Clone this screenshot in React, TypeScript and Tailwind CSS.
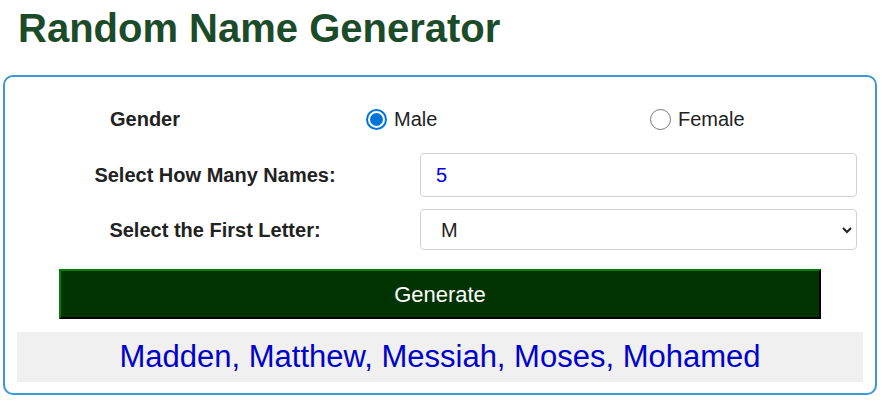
import { useState } from "react";

const letters = "ABCDEFGHIJKLMNOPQRSTUVWXYZ".split("");

function Radio({ checked, label, onClick }: { checked: boolean; label: string; onClick: () => void }) {
  return (
    <button type="button" onClick={onClick} className="flex items-center gap-[7px] text-[20px] text-[#222]">
      {checked ? (
        <span className="flex h-[21px] w-[21px] items-center justify-center rounded-full border-2 border-[#0075d9] bg-white">
          <span className="h-[13px] w-[13px] rounded-full bg-[#0075d9]" />
        </span>
      ) : (
        <span className="h-[21px] w-[21px] rounded-full border-[1.5px] border-[#767676] bg-white" />
      )}
      <span>{label}</span>
    </button>
  );
}

export default function App() {
  const [gender, setGender] = useState("male");
  const [count, setCount] = useState("5");
  const [letter, setLetter] = useState("M");

  return (
    <div className="min-h-[402px] bg-white pt-[5px] font-['Liberation_Sans',Arial,sans-serif]">
      <h1 className="ml-[18px] text-[40px] font-bold leading-[46px] text-[#1c4b2a]">Random Name Generator</h1>

      <div className="ml-[3px] mr-[5px] mt-[24px] rounded-[10px] border-2 border-[#3b97d8] px-[12px] pb-[11px] pt-[20px]">
        <div className="grid h-[44px] grid-cols-[349px_284px_1fr] items-center">
          <span className="pl-[93px] text-[20px] font-bold text-[#222]">Gender</span>
          <Radio checked={gender === "male"} label="Male" onClick={() => setGender("male")} />
          <Radio checked={gender === "female"} label="Female" onClick={() => setGender("female")} />
        </div>

        <div className="mt-[12px] grid grid-cols-[403px_437px] items-center">
          <label className="pr-[7px] text-center text-[20px] font-bold text-[#222]">Select How Many Names:</label>
          <input
            value={count}
            onChange={(e) => setCount(e.target.value)}
            className="h-[44px] rounded-[4px] border border-[#cfd3d8] px-[15px] text-[20px] text-[#0000ee] outline-none"
          />
        </div>

        <div className="mt-[12px] grid grid-cols-[403px_437px] items-center">
          <label className="pr-[7px] text-center text-[20px] font-bold text-[#222]">Select the First Letter:</label>
          <div className="relative">
            <select
              value={letter}
              onChange={(e) => setLetter(e.target.value)}
              className="h-[41px] w-full appearance-none rounded-[4px] border border-[#cfd3d8] bg-white px-[20px] text-[20px] text-[#222] outline-none"
            >
              {letters.map((l) => (
                <option key={l} value={l}>
                  {l}
                </option>
              ))}
            </select>
            <svg className="pointer-events-none absolute right-[4px] top-[15px]" width="12" height="12" viewBox="0 0 12 12">
              <path d="M2 4l4 4 4-4" fill="none" stroke="#222" strokeWidth="2" />
            </svg>
          </div>
        </div>

        <button
          type="button"
          className="mx-[42px] mt-[19px] block h-[50px] w-[762px] border-2 border-b-black border-l-[#008000] border-r-black border-t-[#008000] bg-[#003300] text-[22px] text-white"
        >
          Generate
        </button>

        <div className="mt-[13px] flex h-[50px] items-center justify-center bg-[#f0f0f0] text-[31px] text-[#0000cd]">
          Madden, Matthew, Messiah, Moses, Mohamed
        </div>
      </div>
    </div>
  );
}
